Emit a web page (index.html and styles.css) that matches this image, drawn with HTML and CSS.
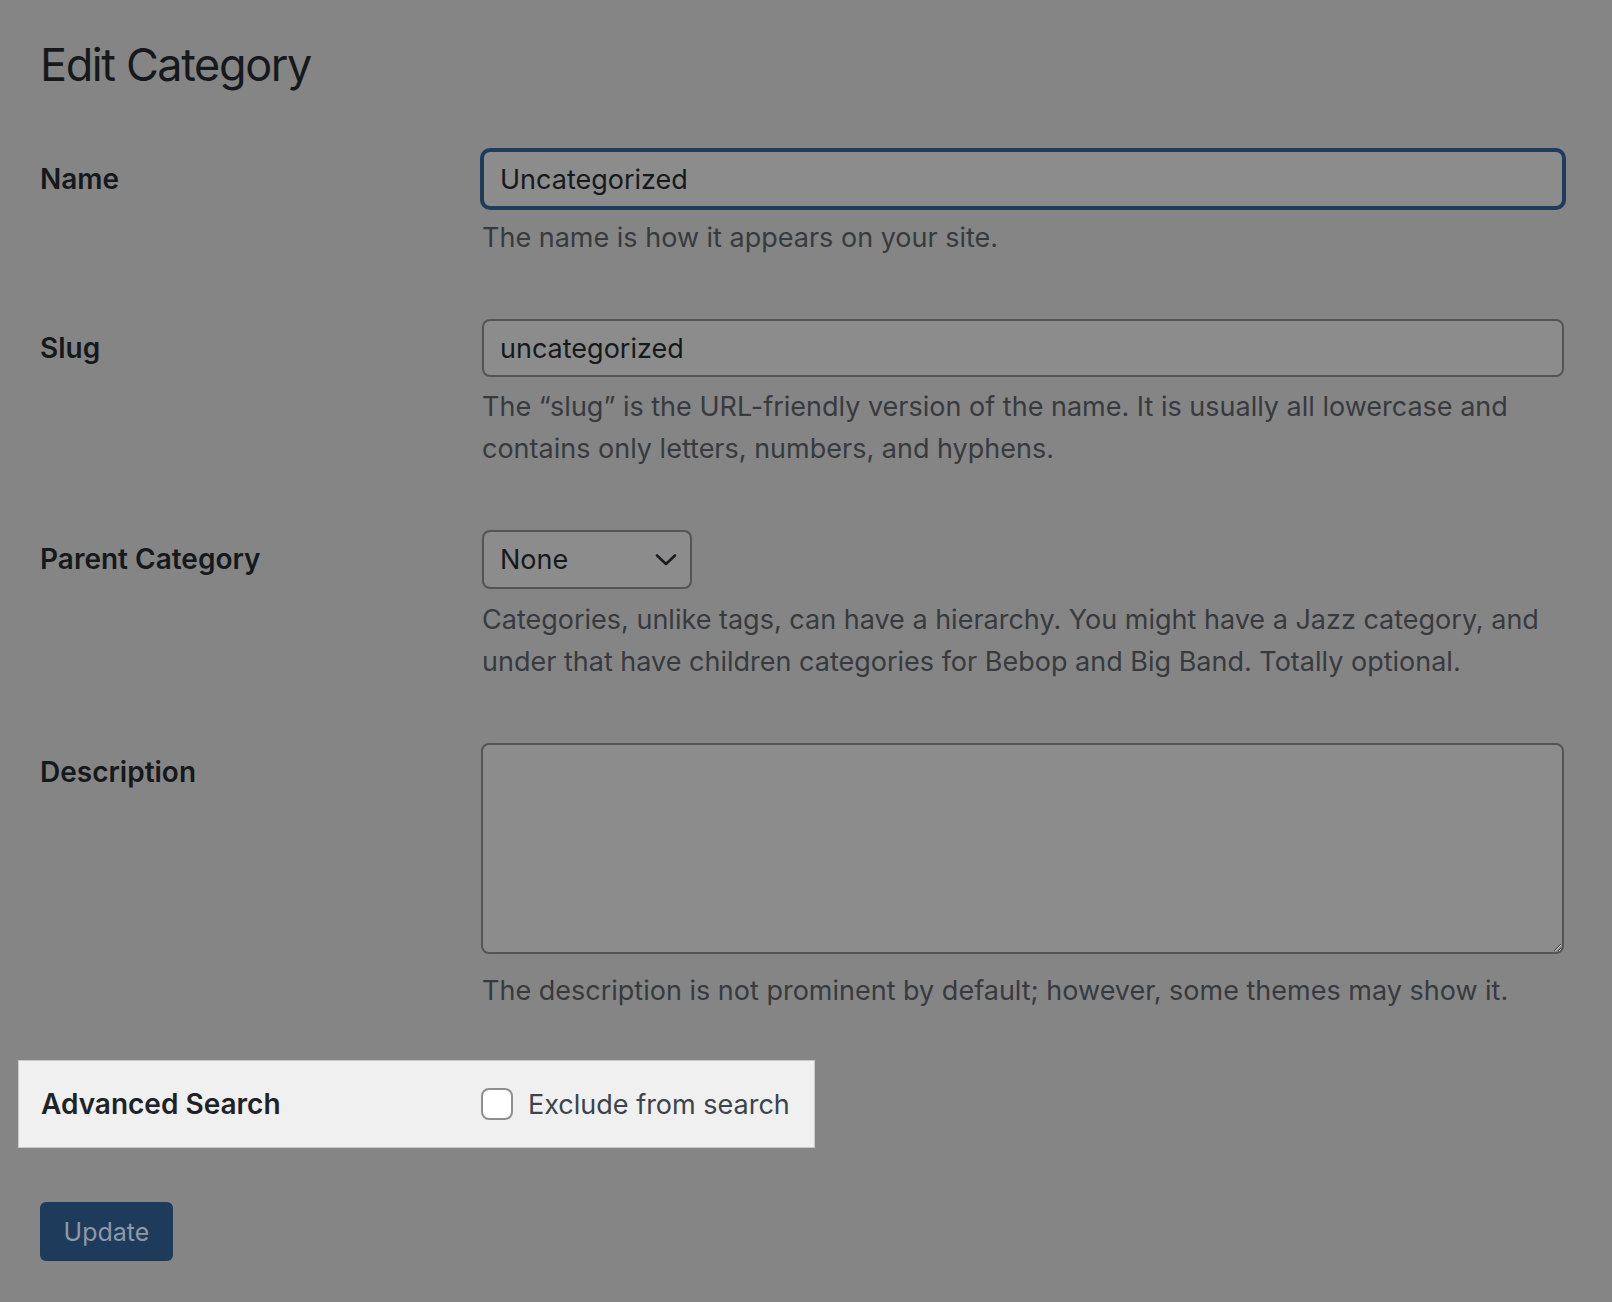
FILE: index.html
```html
<!DOCTYPE html>
<html lang="en">
<head>
<meta charset="utf-8">
<title>Edit Category</title>
<link rel="stylesheet" href="styles.css">
</head>
<body>
<div class="wrap">
  <h1 class="title">Edit Category</h1>
  <form class="form">
    <div class="row">
      <label class="label" for="name">Name</label>
      <div class="field">
        <input class="input input-focus" id="name" type="text" value="Uncategorized">
        <p class="desc">The name is how it appears on your site.</p>
      </div>
    </div>
    <div class="row">
      <label class="label" for="slug">Slug</label>
      <div class="field">
        <input class="input" id="slug" type="text" value="uncategorized">
        <p class="desc">The “slug” is the URL-friendly version of the name. It is usually all lowercase and<br>contains only letters, numbers, and hyphens.</p>
      </div>
    </div>
    <div class="row">
      <label class="label">Parent Category</label>
      <div class="field">
        <div class="select">
          <span>None</span>
          <svg class="chev" width="22" height="14" viewBox="0 0 22 14"><path d="M2 2.5 L11 11 L20 2.5" fill="none" stroke="#1a1c1f" stroke-width="2.6" stroke-linecap="round" stroke-linejoin="round"/></svg>
        </div>
        <p class="desc desc-select">Categories, unlike tags, can have a hierarchy. You might have a Jazz category, and<br>under that have children categories for Bebop and Big Band. Totally optional.</p>
      </div>
    </div>
    <div class="row">
      <label class="label" for="desc">Description</label>
      <div class="field">
        <textarea class="textarea" id="desc"></textarea>
        <p class="desc desc-area">The description is not prominent by default; however, some themes may show it.</p>
      </div>
    </div>
    <div class="adv">
      <span class="adv-label">Advanced Search</span>
      <span class="check-wrap"><span class="checkbox"></span><span class="check-text">Exclude from search</span></span>
    </div>
    <button class="btn" type="button">Update</button>
  </form>
</div>
</body>
</html>
```

FILE: styles.css
```css
html, body {
  margin: 0;
  padding: 0;
  background: #858585;
}
body {
  font-family: Inter, "Noto Sans", "Liberation Sans", sans-serif;
  color: #16191c;
  width: 1612px;
  height: 1302px;
  overflow: hidden;
}
.wrap {
  padding: 35px 0 0 40px;
}
.title {
  margin: 0;
  font-size: 45px;
  line-height: 60px;
  font-weight: 400;
  letter-spacing: -1.4px;
  color: #16191c;
}
.form {
  margin-top: 55px;
  display: flex;
  flex-direction: column;
}
.row {
  display: grid;
  grid-template-columns: 442px 1082px;
}
.row + .row {
  margin-top: 60px;
}
.label {
  font-size: 28px;
  font-weight: 600;
  line-height: 36px;
  padding-top: 11px;
  color: #16191c;
}
.field {
  display: flex;
  flex-direction: column;
  align-items: flex-start;
}
.input {
  box-sizing: border-box;
  width: 1082px;
  height: 58px;
  margin: 0;
  padding: 0 16px;
  border: 2px solid #525456;
  border-radius: 8px;
  background: #8c8c8c;
  font-family: inherit;
  font-size: 27px;
  color: #16191c;
  outline: none;
}
.input-focus {
  border-color: #1f3c5e;
  box-shadow: 0 0 0 2px #1f3c5e;
}
.desc {
  margin: 9px 0 0;
  font-size: 27px;
  line-height: 42px;
  color: #373a3e;
}
.desc-select {
  margin-top: 10px;
}
.desc-area {
  margin-top: 16px;
}
.select {
  box-sizing: border-box;
  width: 210px;
  height: 59px;
  padding: 0 13px 0 16px;
  border: 2px solid #525456;
  border-radius: 8px;
  background: #8c8c8c;
  display: flex;
  align-items: center;
  justify-content: space-between;
  font-size: 27px;
  color: #16191c;
}
.chev {
  display: block;
}
.textarea {
  box-sizing: border-box;
  display: block;
  width: 1083px;
  height: 211px;
  margin: 0 0 0 -1px;
  border: 2px solid #525456;
  border-radius: 8px;
  background: #8c8c8c;
  font-family: inherit;
  font-size: 27px;
  outline: none;
}
.adv {
  margin: 48px 0 0 -22px;
  box-sizing: border-box;
  width: 797px;
  height: 88px;
  padding-left: 22px;
  background: #f0f0f0;
  border: 1px solid #cacaca;
  display: grid;
  grid-template-columns: 440px auto;
  align-items: center;
}
.adv-label {
  font-size: 28px;
  font-weight: 600;
  color: #1d2327;
}
.check-wrap {
  display: flex;
  align-items: center;
  gap: 15px;
}
.checkbox {
  box-sizing: border-box;
  width: 32px;
  height: 32px;
  border: 2px solid #8c8f94;
  border-radius: 8px;
  background: #ffffff;
}
.check-text {
  font-size: 27px;
  color: #3c434a;
}
.btn {
  align-self: flex-start;
  margin-top: 54px;
  box-sizing: border-box;
  height: 59px;
  width: 133px;
  padding: 0;
  border: none;
  border-radius: 6px;
  background: #1f3b5c;
  color: #8e99a6;
  font-family: inherit;
  font-size: 25px;
}
```
